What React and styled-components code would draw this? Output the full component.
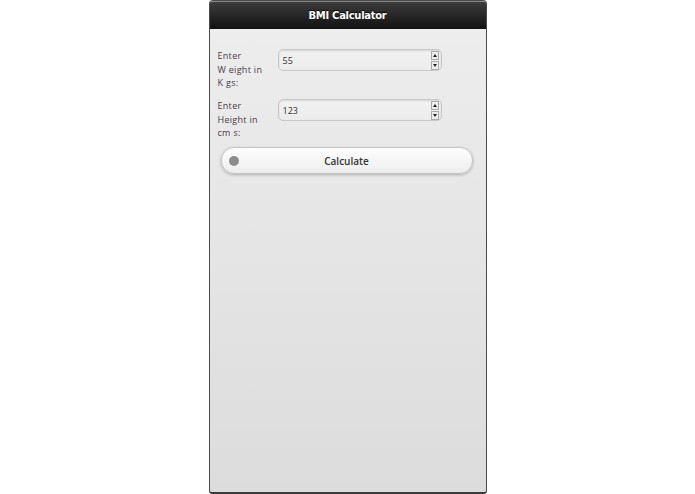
import React from "react";
import styled, { createGlobalStyle } from "styled-components";

const Global = createGlobalStyle`
  html, body { margin: 0; padding: 0; background: #fff; }
  body { font-family: "Open Sans", "DejaVu Sans", sans-serif; }
`;

const Page = styled.div`
  width: 695px;
  height: 494px;
  display: flex;
  justify-content: center;
`;

const Phone = styled.div`
  width: 276px;
  height: 491px;
  border: 1px solid #4a4a4a;
  border-bottom: 2px solid #3a3a3a;
  border-radius: 4px 4px 3px 3px;
  display: flex;
  flex-direction: column;
  overflow: hidden;
  background: linear-gradient(#eeeeee, #dcdcdc);
`;

const Header = styled.div`
  height: 27px;
  flex: none;
  border-top: 1px solid #8a8a8a;
  background: linear-gradient(#3c3c3c, #111);
  color: #fff;
  font-family: "DejaVu Sans", "Open Sans", sans-serif;
  font-weight: 700;
  font-size: 10px;
  display: flex;
  align-items: center;
  justify-content: center;
  text-shadow: 0 -1px 0 #000;
  letter-spacing: -0.3px;
`;

const Content = styled.div`
  padding: 20px 13px 0 8px;
  display: flex;
  flex-direction: column;
`;

const Row = styled.div`
  display: flex;
  align-items: flex-start;
  height: ${(p) => p.h}px;
`;

const Label = styled.div`
  width: 60px;
  font-size: 9px;
  line-height: 13.5px;
  color: #4a3a4a;
  letter-spacing: 0.3px;
`;

const Field = styled.div`
  width: 164px;
  height: 22px;
  margin-top: ${(p) => p.mt}px;
  box-sizing: border-box;
  border: 1px solid #c8c8c8;
  border-radius: 5px;
  background: linear-gradient(#f2f2f2, #ececec);
  box-shadow: inset 0 1px 2px rgba(0,0,0,0.12);
  display: flex;
  align-items: center;
  padding: 0 2px 0 4px;
`;

const Value = styled.span`
  flex: 1;
  font-size: 9px;
  color: #333;
`;

const Spinner = styled.div`
  display: flex;
  flex-direction: column;
  gap: 1px;
`;

const SpinBtn = styled.div`
  width: 8px;
  height: 9px;
  box-sizing: border-box;
  border: 1px solid #aaa;
  background: #eee;
  display: flex;
  align-items: center;
  justify-content: center;
  &::after {
    content: "";
    border-left: 2px solid transparent;
    border-right: 2px solid transparent;
    ${(p) => (p.up ? "border-bottom: 3px solid #222;" : "border-top: 3px solid #222;")}
  }
`;

const Button = styled.div`
  margin: 0 0 0 3px;
  width: 252px;
  height: 27px;
  box-sizing: border-box;
  border: 1px solid #c4c4c4;
  border-radius: 13px;
  background: linear-gradient(#fefefe, #ededed);
  box-shadow: 0 1px 3px rgba(0,0,0,0.25);
  display: flex;
  align-items: center;
  position: relative;
  font-size: 10px;
  font-weight: 600;
  color: #333;
  justify-content: center;
`;

const Dot = styled.span`
  position: absolute;
  left: 7px;
  top: 50%;
  width: 10px;
  height: 10px;
  margin-top: -5px;
  border-radius: 50%;
  background: #8c8c8c;
`;

function NumField({ value, mt }) {
  return (
    <Field mt={mt}>
      <Value>{value}</Value>
      <Spinner>
        <SpinBtn up />
        <SpinBtn />
      </Spinner>
    </Field>
  );
}

export default function App() {
  return (
    <>
      <Global />
      <Page>
        <Phone>
          <Header>BMI Calculator</Header>
          <Content>
            <Row h={50}>
              <Label>
                Enter
                <br />
                W eight in
                <br />
                K gs:
              </Label>
              <NumField value="55" mt={0} />
            </Row>
            <Row h={48}>
              <Label>
                Enter
                <br />
                Height in
                <br />
                cm s:
              </Label>
              <NumField value="123" mt={0} />
            </Row>
            <Button>
              <Dot />
              Calculate
            </Button>
          </Content>
        </Phone>
      </Page>
    </>
  );
}
